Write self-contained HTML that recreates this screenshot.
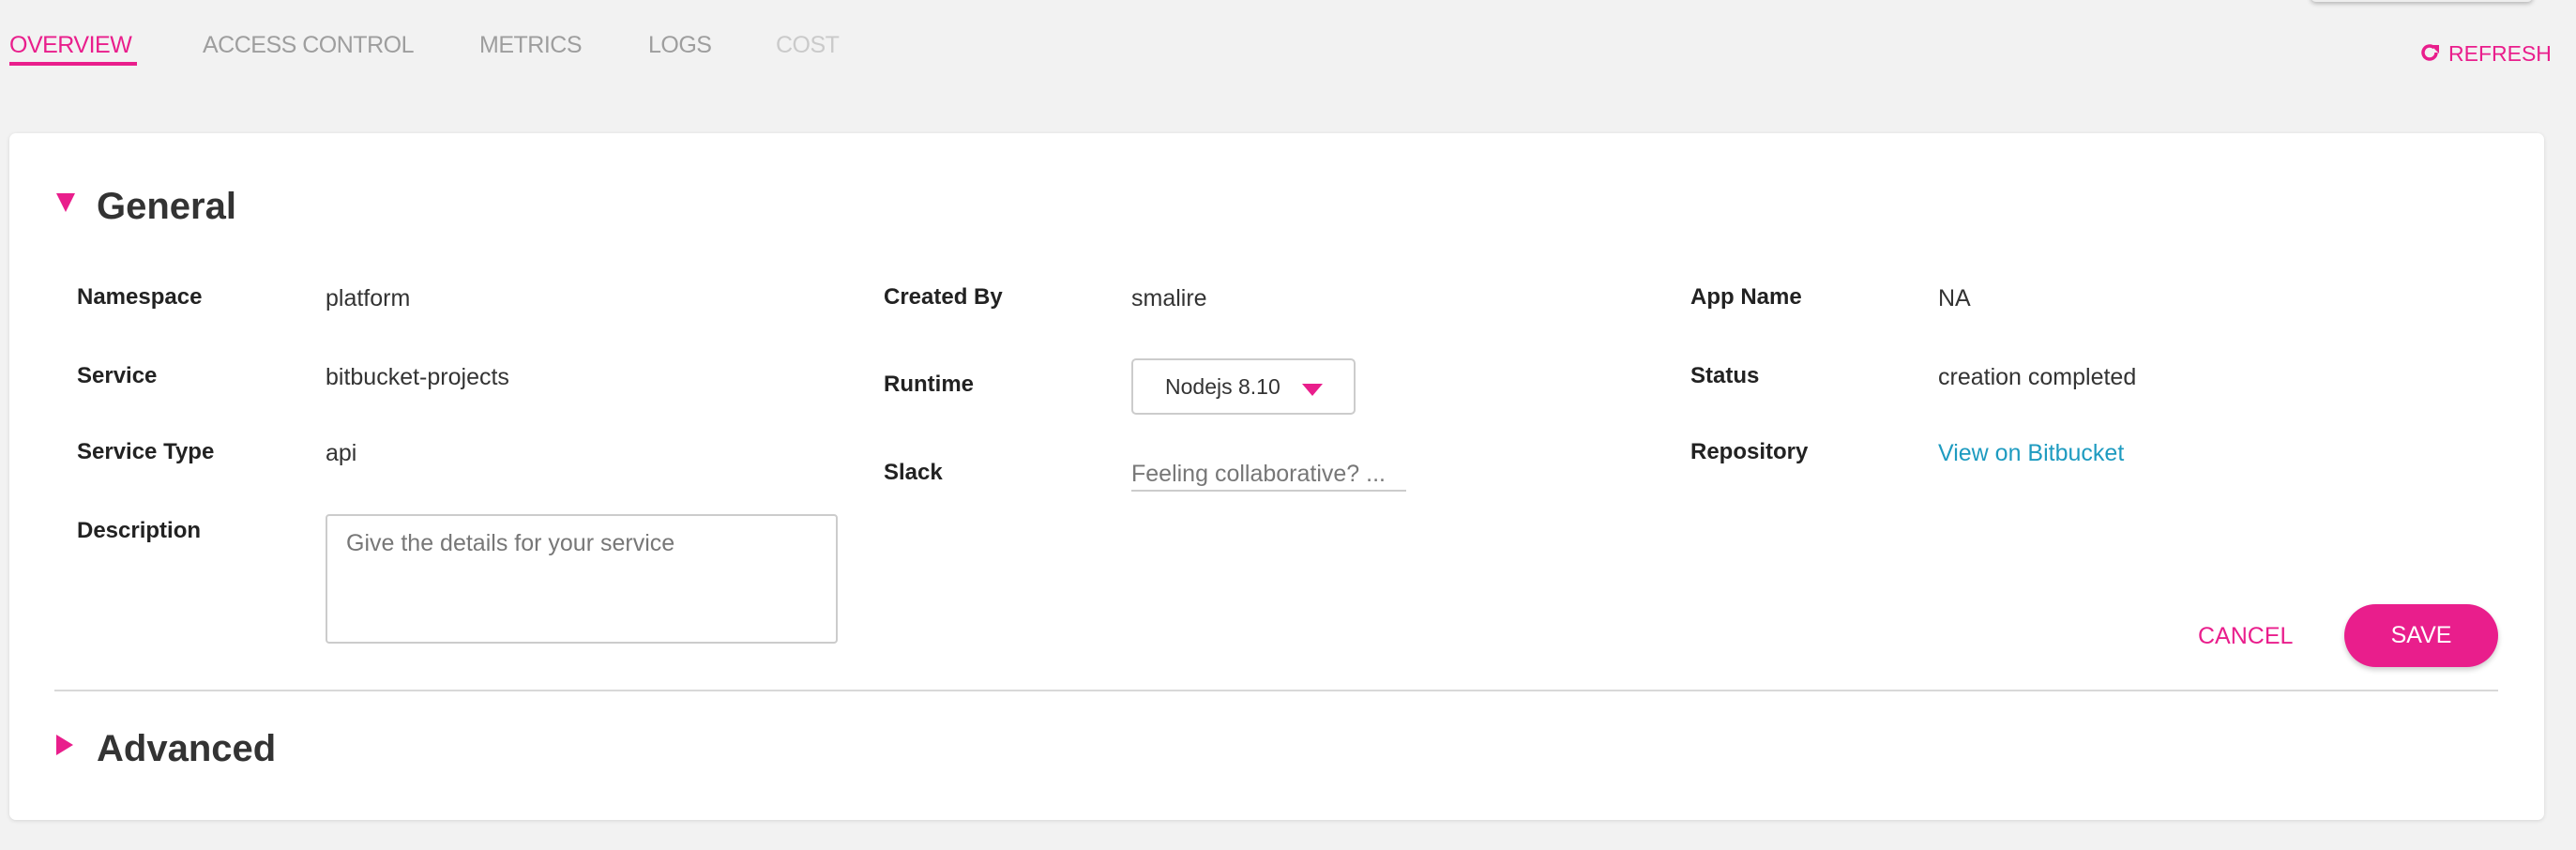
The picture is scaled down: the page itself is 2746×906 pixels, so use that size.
<!DOCTYPE html>
<html><head><meta charset="utf-8"><style>
*{box-sizing:border-box;margin:0;padding:0}
body{width:2746px;height:906px;background:#f2f2f2;font-family:"Liberation Sans",sans-serif;position:relative;overflow:hidden}
.a{position:absolute;white-space:nowrap}
.tab{top:31px;font-size:25px;color:#9e9e9e;line-height:34px;letter-spacing:-0.5px}
.lab{font-size:24px;font-weight:bold;color:#222;line-height:30px}
.val{font-size:25px;color:#333;line-height:30px}
</style></head><body>
<div class="a" style="left:2463px;top:-10px;width:237px;height:12px;border-radius:8px;background:#eee;box-shadow:0 2px 5px rgba(0,0,0,.25)"></div>
<div class="a tab" style="left:10px;color:#e91e8c">OVERVIEW</div>
<div class="a" style="left:10px;top:66px;width:136px;height:4px;background:#e91e8c"></div>
<div class="a tab" style="left:216px">ACCESS CONTROL</div>
<div class="a tab" style="left:511px">METRICS</div>
<div class="a tab" style="left:691px">LOGS</div>
<div class="a tab" style="left:827px;color:#cacaca">COST</div>
<svg class="a" style="left:2578px;top:44px" width="24" height="24" viewBox="0 0 24 24"><path d="M19 12a7 7 0 1 1-2.2-5.1" fill="none" stroke="#e91e8c" stroke-width="3.5"/><path d="M13 4h9v9z" fill="#e91e8c"/></svg>
<div class="a" style="left:2610px;top:41px;font-size:23px;color:#e91e8c;line-height:32px">REFRESH</div>
<div class="a" style="left:10px;top:142px;width:2702px;height:732px;background:#fff;border-radius:7px;box-shadow:0 1px 4px rgba(0,0,0,.12)"></div>
<svg class="a" style="left:60px;top:206px" width="20" height="20"><path d="M0 0h20L10 20z" fill="#e91e8c"/></svg>
<div class="a" style="left:103px;top:195px;font-size:40px;font-weight:bold;color:#333;line-height:50px">General</div>
<div class="a lab" style="left:82px;top:302px">Namespace</div>
<div class="a val" style="left:347px;top:303px">platform</div>
<div class="a lab" style="left:82px;top:386px">Service</div>
<div class="a val" style="left:347px;top:387px">bitbucket-projects</div>
<div class="a lab" style="left:82px;top:467px">Service Type</div>
<div class="a val" style="left:347px;top:468px">api</div>
<div class="a lab" style="left:82px;top:551px">Description</div>
<div class="a" style="left:347px;top:548px;width:546px;height:138px;border:2px solid #ccc;border-radius:4px;font-size:25px;color:#777;padding:15px 20px">Give the details for your service</div>
<div class="a lab" style="left:942px;top:302px">Created By</div>
<div class="a val" style="left:1206px;top:303px">smalire</div>
<div class="a lab" style="left:942px;top:395px">Runtime</div>
<div class="a" style="left:1206px;top:382px;width:239px;height:60px;border:2px solid #ccc;border-radius:5px"></div>
<div class="a" style="left:1242px;top:397px;font-size:23px;color:#333;line-height:30px">Nodejs 8.10</div>
<svg class="a" style="left:1388px;top:409px" width="22" height="13"><path d="M0 0h22L11 13z" fill="#e91e8c"/></svg>
<div class="a lab" style="left:942px;top:489px">Slack</div>
<div class="a" style="left:1206px;top:490px;font-size:25px;color:#777;line-height:30px;width:293px;border-bottom:2px solid #ccc;padding-bottom:2px">Feeling collaborative? ...</div>
<div class="a lab" style="left:1802px;top:302px">App Name</div>
<div class="a val" style="left:2066px;top:303px">NA</div>
<div class="a lab" style="left:1802px;top:386px">Status</div>
<div class="a val" style="left:2066px;top:387px">creation completed</div>
<div class="a lab" style="left:1802px;top:467px">Repository</div>
<div class="a val" style="left:2066px;top:468px;color:#1e9bc0">View on Bitbucket</div>
<div class="a" style="left:2343px;top:663px;font-size:25px;color:#e91e8c;line-height:30px">CANCEL</div>
<div class="a" style="left:2499px;top:644px;width:164px;height:67px;border-radius:34px;background:#e91e8c;color:#fff;font-size:25px;line-height:67px;text-align:center;box-shadow:0 3px 6px rgba(0,0,0,.2)">SAVE</div>
<div class="a" style="left:58px;top:735px;width:2605px;height:2px;background:#d8d8d8"></div>
<svg class="a" style="left:60px;top:783px" width="18" height="22"><path d="M0 0v22L18 11z" fill="#e91e8c"/></svg>
<div class="a" style="left:103px;top:773px;font-size:40px;font-weight:bold;color:#333;line-height:50px">Advanced</div>
</body></html>
